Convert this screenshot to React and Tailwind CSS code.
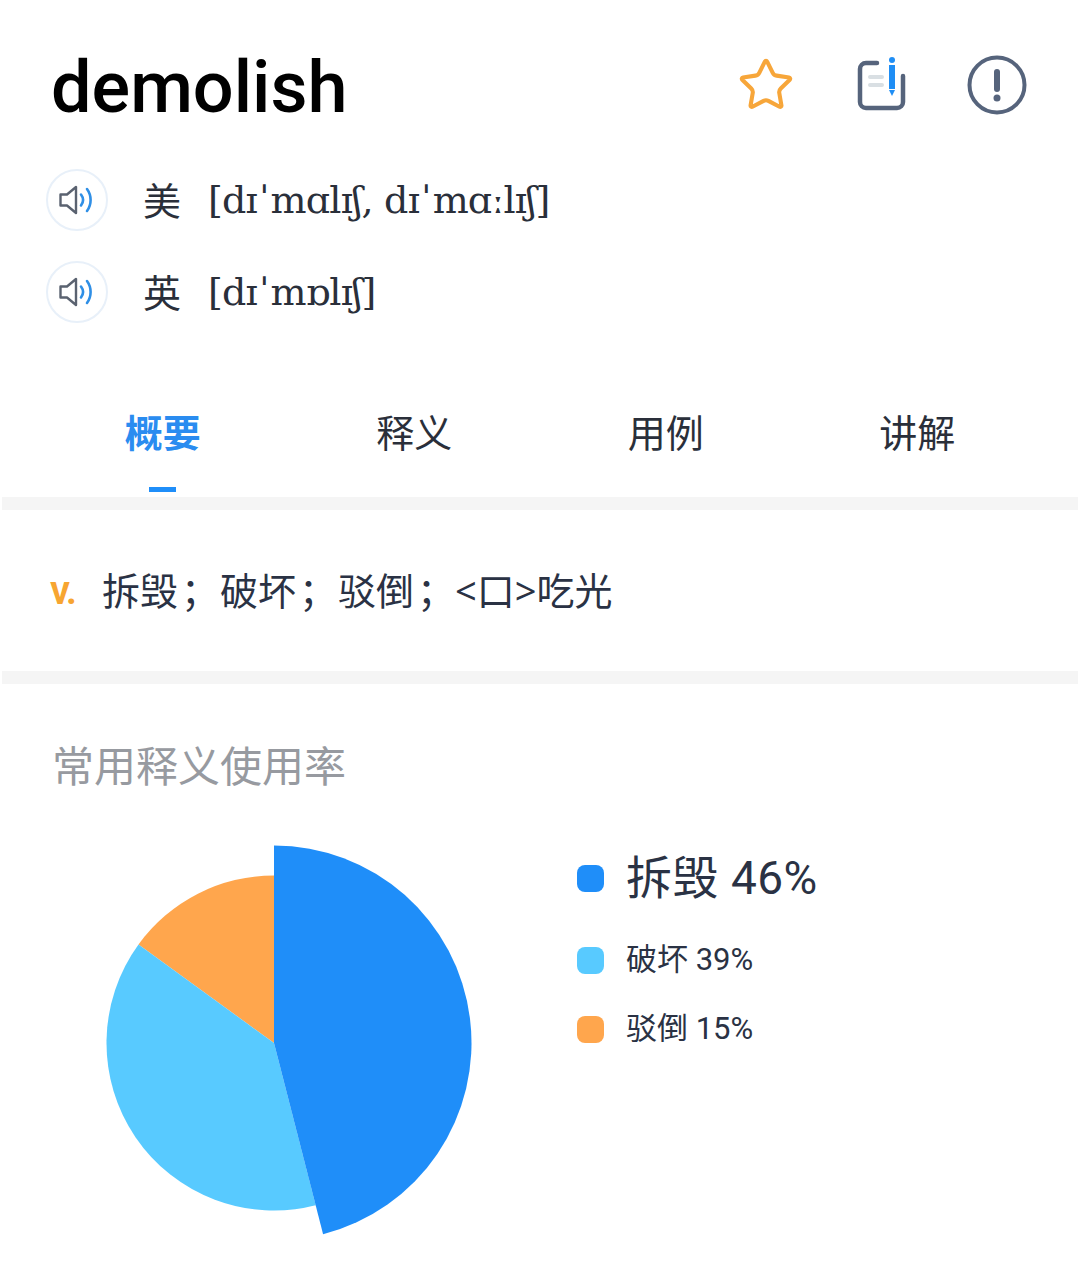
import { Star } from 'lucide-react'

const CJK = '"Noto Sans", "Noto Sans CJK SC", sans-serif'
const ROBOTO_CJK = 'Roboto, "Noto Sans CJK SC", sans-serif'

const tabs = ['概要', '释义', '用例', '讲解']

const legend = [
  { label: '破坏 39%', color: 'bg-[#58caff]' },
  { label: '驳倒 15%', color: 'bg-[#ffa64d]' },
]

function Speaker() {
  return (
    <div className="w-[62px] h-[62px] shrink-0 rounded-full border-2 border-[#e8f0f9] flex items-center justify-center">
      <svg width="36" height="32" viewBox="0 0 36 32" fill="none" strokeLinecap="round" strokeLinejoin="round" className="-ml-[1px]">
        <path d="M1.500 10.500h6.500l9-7.500v26l-9-7.500h-6.500z" stroke="#5a6270" strokeWidth="2.400" />
        <path d="M22 10.500c2.500 3.300 2.500 7.700 0 11" stroke="#2f8fe6" strokeWidth="2.600" />
        <path d="M28 5c4.800 6.500 4.800 15.500 0 22" stroke="#2f8fe6" strokeWidth="2.600" />
      </svg>
    </div>
  )
}

// the stress mark sits a little apart from its neighbours in the reference
function Ipa({ text }) {
  return text.split('ˈ').map((part, i) => (
    <span key={part + i}>
      {i > 0 && <span className="mx-[2px]">ˈ</span>}
      {part}
    </span>
  ))
}

function Phonetic({ region, text }) {
  return (
    <div className="flex items-center h-[62px] pl-[46px]">
      <Speaker />
      <span className="ml-[35px] w-[65px] text-[38px] text-[#2a2f3a]">{region}</span>
      <span className="text-[38px] tracking-[-0.8px] text-[#2a2f3a]" style={{ fontFamily: '"DejaVu Serif", serif' }}>
        <Ipa text={text} />
      </span>
    </div>
  )
}

function NoteIcon() {
  return (
    <svg width="50" height="56" viewBox="0 0 50 56" fill="none" strokeLinecap="round" strokeLinejoin="round">
      <path d="M21 6h-11a6 6 0 0 0-6 6v33a6 6 0 0 0 6 6h31a6 6 0 0 0 6-6v-26" stroke="#56647c" strokeWidth="4.500" />
      <path d="M14 20h12M14 28h12" stroke="#d9dfe3" strokeWidth="4" />
      <rect x="33" y="8" width="6" height="24" fill="#1f8ef5" />
      <circle cx="36" cy="3" r="3" fill="#1f8ef5" />
      <path d="M33 33h6l-3 6z" fill="#1f8ef5" />
    </svg>
  )
}

function InfoIcon() {
  return (
    <svg width="60" height="60" viewBox="0 0 60 60" fill="none" strokeLinecap="round">
      <circle cx="30" cy="30" r="27.500" stroke="#56647c" strokeWidth="4" />
      <path d="M30 17v17" stroke="#56647c" strokeWidth="6" />
      <circle cx="30" cy="43" r="3.500" fill="#56647c" />
    </svg>
  )
}

function Pie() {
  return (
    <svg width="380" height="400" viewBox="0 0 380 400">
      <path d="M180 198 L44.500 99.500 A167.500 167.500 0 0 1 180 30.500 Z" fill="#ffa64d" />
      <path d="M180 198 L221.700 360.200 A167.500 167.500 0 0 1 44.500 99.500 Z" fill="#58caff" />
      <path d="M180 198 L180 0.500 A197.500 197.500 0 0 1 229.100 389.300 Z" fill="#1f8ef9" />
    </svg>
  )
}

function Semi({ className = 'w-[42px]' }) {
  return <span className={`inline-block pl-[3px] ${className}`}>；</span>
}

export default function App() {
  return (
    <div className="w-[1080px] h-[1280px] bg-white overflow-hidden" style={{ fontFamily: CJK }}>
      {/* Header */}
      <div className="flex items-center justify-between h-[169px] pl-[51px] pr-[53px]">
        <h1 className="pt-[6px] text-[72px] font-medium text-black" style={{ fontFamily: 'Roboto, sans-serif' }}>
          demolish
        </h1>
        <div className="flex items-center">
          <Star size={58} strokeWidth={1.7} className="text-[#f7a63a]" />
          <div className="ml-[61px] mr-[61px]">
            <NoteIcon />
          </div>
          <InfoIcon />
        </div>
      </div>

      {/* Phonetics */}
      <div className="flex flex-col gap-[30px]">
        <Phonetic region="美" text="[dɪˈmɑlɪʃ, dɪˈmɑːlɪʃ]" />
        <Phonetic region="英" text="[dɪˈmɒlɪʃ]" />
      </div>

      {/* Tabs */}
      <div className="grid grid-cols-4 mt-[62px] h-[112px] px-[37px]">
        {tabs.map((tab, i) => (
          <div key={tab} className="relative flex justify-center pt-[19px]">
            <span className={i === 0 ? 'text-[38px] font-semibold text-[#2a8cf0]' : 'text-[38px] text-[#2a2f3a]'}>
              {tab}
            </span>
            {i === 0 && <div className="absolute bottom-[5px] w-[27px] h-[5px] bg-[#1f8ef9]" />}
          </div>
        ))}
      </div>
      <div className="h-[13px] mx-[2px] bg-[#f5f5f5]" />

      {/* Definition */}
      <div className="flex items-center h-[161px] pl-[50px] text-[38px] text-[#2a3244]">
        <span className="w-[52px] text-[40px] font-semibold tracking-[-1.5px] text-[#f7a531]" style={{ fontFamily: 'Roboto, sans-serif' }}>v.</span>
        <span>
          拆毁<Semi />破坏<Semi />驳倒<Semi className="w-[41px]" />&lt;口&gt;吃光
        </span>
      </div>
      <div className="h-[13px] mx-[2px] bg-[#f5f5f5]" />

      {/* Usage */}
      <p className="pl-[52px] mt-[52px] text-[42px] leading-[60px] text-[#979aa0]">常用释义使用率</p>

      <div className="flex mt-[49px] pl-[94px]">
        <Pie />
        <div className="ml-[103px] pt-[1px]" style={{ fontFamily: ROBOTO_CJK }}>
          <div className="flex items-center h-[64px] gap-[22px]">
            <div className="w-[27px] h-[27px] rounded-[8px] bg-[#1f8ef9]" />
            <span className="text-[46px] tracking-[0.5px] text-[#2a3244]">拆毁 46%</span>
          </div>
          <div className="mt-[16px]">
            {legend.map((item) => (
              <div key={item.label} className="flex items-center h-[69px] gap-[22px]">
                <div className={`w-[27px] h-[27px] rounded-[8px] ${item.color}`} />
                <span className="text-[31px] text-[#2a3244]">{item.label}</span>
              </div>
            ))}
          </div>
        </div>
      </div>
    </div>
  )
}
